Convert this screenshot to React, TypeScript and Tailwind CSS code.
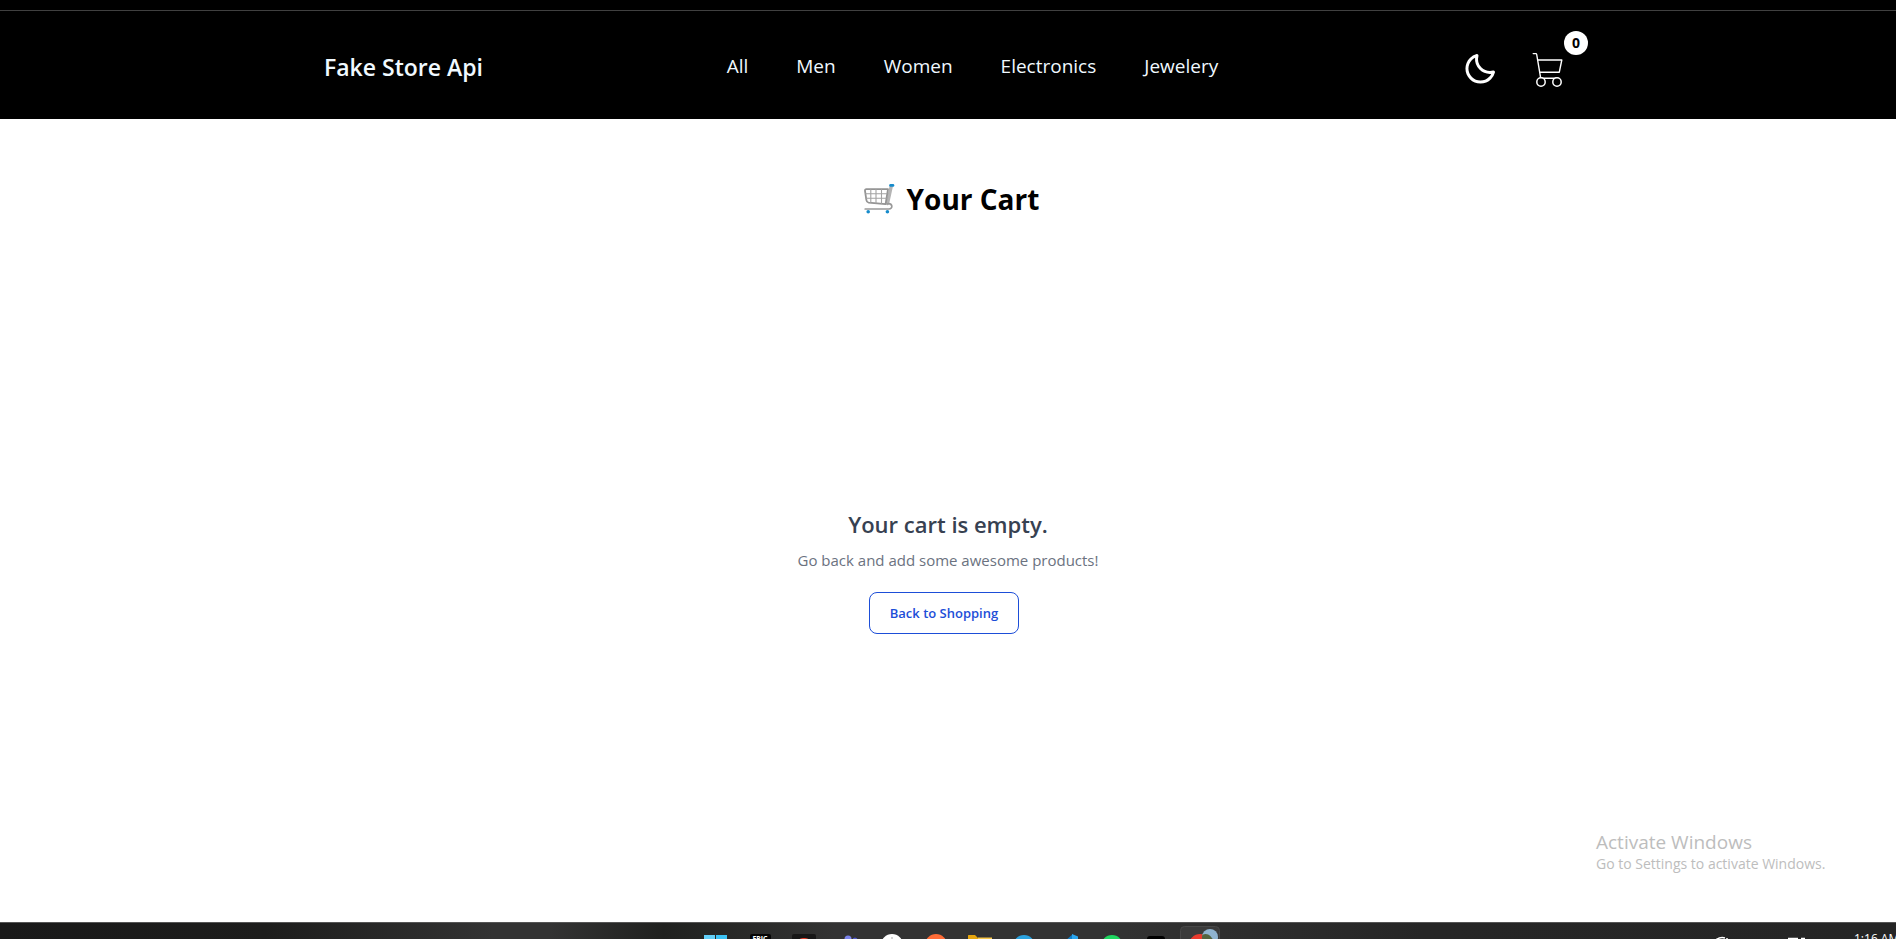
import React from "react";
import { BiMoon } from "react-icons/bi";

const categories = ["All", "Men", "Women", "Electronics", "Jewelery"];

function CartIcon() {
  return (
    <svg viewBox="0 0 36 36" className="size-9" fill="none" stroke="#fff" strokeLinecap="round" strokeLinejoin="round" aria-hidden="true">
      <path d="M3.2 2.6h2.600c.6 0 .8.3.9.9l3.900 23.200" strokeWidth="1.4" />
      <path d="M8.200 9h23.600l-2.500 12.200H10.300" strokeWidth="1.4" />
      <path d="M11 27.300h16" strokeWidth="1.4" />
      <circle cx="11" cy="31" r="4.200" strokeWidth="1.5" fill="#000" />
      <circle cx="27" cy="31" r="4.200" strokeWidth="1.5" fill="#000" />
    </svg>
  );
}

function TrolleyIcon() {
  return (
    <svg viewBox="0 0 32 32" className="size-8" fill="none" strokeLinecap="round" strokeLinejoin="round" aria-hidden="true">
      <path d="M28.200 3.500 24.500 20.500" stroke="#b4b4b4" strokeWidth="3.4" />
      <path d="M3.400 6.200H25L22.600 21.200 5.600 19.600C4.400 19.400 3.600 18.600 3.400 17.200L2 7.800c-.1-1 .4-1.600 1.400-1.600Z" fill="#fff" stroke="#949494" strokeWidth="1.8" />
      <path d="M7.800 6.500v13M13 6.500v13.500M18.500 6.500v14M2.500 10.800h21.500M3 15.200h20.400" stroke="#a3a3a3" strokeWidth="1.1" />
      <path d="M24.500 20.800c5.200-.8 5.800 5 1.400 5.200H2.200" stroke="#999" strokeWidth="1.7" />
      <path d="M27.500 2.400h2.500" stroke="#168bcb" strokeWidth="2.6" />
      <circle cx="5.200" cy="28.800" r="1.800" fill="#168bcb" />
      <circle cx="24.400" cy="28.800" r="1.800" fill="#168bcb" />
    </svg>
  );
}

const apps: { name: string; art: React.ReactNode }[] = [
  {
    name: "Start",
    art: (
      <>
        <rect x="10" y="12" width="11" height="11" fill="#63d0f8" />
        <rect x="22" y="12" width="11" height="11" fill="#3cc3f5" />
      </>
    ),
  },
  {
    name: "Epic Games",
    art: (
      <>
        <rect x="12" y="11" width="21" height="24" rx="2" fill="#050505" />
        <text x="22" y="18" textAnchor="middle" fontSize="7" fontWeight="700" fill="#fff">EPIC</text>
      </>
    ),
  },
  {
    name: "Games",
    art: (
      <>
        <rect x="10" y="11" width="24" height="24" rx="2" fill="#171717" />
        <path d="M17 17c1-2 3-2 5-2s4 0 5 2Z" fill="#e0402c" />
      </>
    ),
  },
  {
    name: "Teams",
    art: (
      <>
        <circle cx="22" cy="16" r="3.500" fill="#7b83eb" />
        <circle cx="29" cy="17" r="2.500" fill="#5059c9" />
      </>
    ),
  },
  {
    name: "Search",
    art: (
      <>
        <circle cx="22" cy="22" r="11" fill="#fff" />
        <path d="M22 14v3" stroke="#aaa" />
      </>
    ),
  },
  { name: "Postman", art: <circle cx="22" cy="22" r="11" fill="#ff6c37" /> },
  {
    name: "Files",
    art: (
      <>
        <path d="M10 20v-7.500q0-.5.500-.5H17l3 3v5Z" fill="#e5a50f" />
        <path d="M20 14.500h14v5H20Z" fill="#fbc94b" />
      </>
    ),
  },
  { name: "Telegram", art: <circle cx="22" cy="23" r="11" fill="#2ba3e0" /> },
  {
    name: "Code",
    art: (
      <>
        <path d="m19 18 8-7v7Z" fill="#0f7ec9" />
        <path d="m26 11 6 2.500V18h-6Z" fill="#2ba6ee" />
      </>
    ),
  },
  { name: "Music", art: <circle cx="22" cy="23" r="11" fill="#1ed760" /> },
  { name: "Terminal", art: <rect x="13" y="13" width="18" height="10" rx="3" fill="#000" /> },
  {
    name: "Browser",
    art: (
      <>
        <rect x="2.500" y="3.500" width="39" height="34" rx="4" fill="#3b3b3b" stroke="#484848" />
        <circle cx="22" cy="22" r="11" fill="#ea3b2e" />
        <circle cx="32" cy="14" r="8" fill="#8fb3cf" />
        <path d="M24.300 12c3-2 6-1 8 1l4 5H24.500c-.6-2-.7-4-.2-6Z" fill="#53633f" />
      </>
    ),
  },
];

function Header() {
  return (
    <header className="bg-black pt-2.5 text-[#f0f9ff]">
      <div className="border-t border-[#404040]">
        <div className="mx-auto flex h-27 max-w-7xl items-center justify-between px-4 pt-1">
          <a href="#home" className="text-[23px] leading-8 font-semibold">Fake Store Api</a>
          <nav className="flex gap-12 pb-0.5 text-[19px] leading-7">
            {categories.map((c) => (
              <a key={c} href={`#${c.toLowerCase()}`}>{c}</a>
            ))}
          </nav>
          <div className="flex items-center gap-8 pt-1">
            <button type="button" aria-label="Toggle dark mode" className="text-white">
              <BiMoon className="size-9" />
            </button>
            <a href="#cart" aria-label="Shopping cart" className="relative mr-1.5">
              <CartIcon />
              <span className="absolute -top-5 -right-5.5 flex size-6 items-center justify-center rounded-full bg-white text-sm font-bold text-black">0</span>
            </a>
          </div>
        </div>
      </div>
    </header>
  );
}

function Taskbar() {
  return (
    <footer className="relative flex h-[17px] justify-center overflow-hidden border-t border-[#555] bg-[linear-gradient(90deg,#191919_0%,#1d1d1c_14%,#333_26%,#333_29%,#20211f_35%,#333_44%,#333_58%,#262626_75%,#252525_100%)] pl-5">
      <ul className="flex">
        {apps.map((a) => (
          <li key={a.name}>
            <svg viewBox="0 0 44 17" className="h-[17px] w-11" role="img" aria-label={a.name}>{a.art}</svg>
          </li>
        ))}
      </ul>
      <div className="absolute top-2 left-full -ml-45 flex items-start whitespace-nowrap text-white">
        <svg viewBox="0 0 138 8" className="h-2 w-[138px]" fill="none" stroke="#fff" aria-hidden="true">
          <path d="M0 8.500q5-3 9-1.500M11 7v2M72 7.500h10M85 7.500h4" strokeWidth="1.500" />
        </svg>
        <time className="text-xs leading-4">1:16 AM</time>
      </div>
    </footer>
  );
}

export default function App() {
  return (
    <div className="flex h-screen flex-col overflow-hidden bg-white font-['Open_Sans','Noto_Sans',sans-serif]">
      <Header />
      <main className="relative flex flex-1 flex-col items-center pt-15">
        <h1 className="flex items-center gap-3 pl-1.5 text-[28px] leading-10 font-bold text-black">
          <TrolleyIcon />
          Your Cart
        </h1>
        <section className="flex flex-1 flex-col items-center justify-center text-center">
          <h2 className="mb-2 text-[22px] leading-8 font-semibold text-[#374151]">Your cart is empty.</h2>
          <p className="mb-5 text-[15px] leading-6 text-[#6b7280]">Go back and add some awesome products!</p>
          <button type="button" className="mr-2 rounded-lg border border-[#1d4ed8] px-5 py-2.5 text-[13px] leading-5 font-semibold text-[#1d4ed8]">
            Back to Shopping
          </button>
        </section>
        <aside className="pointer-events-none absolute right-16 bottom-12 w-59 text-[#bdbdbd]">
          <p className="text-[19px] leading-6">Activate Windows</p>
          <p className="text-sm leading-5">Go to Settings to activate Windows.</p>
        </aside>
      </main>
      <Taskbar />
    </div>
  );
}
